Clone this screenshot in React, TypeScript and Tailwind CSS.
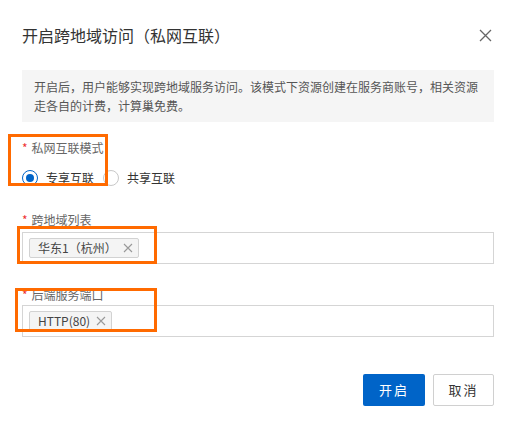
import React from 'react'

const font = { fontFamily: '"Noto Sans CJK SC", "Noto Sans", sans-serif' }

function Tag({ label }: { label: string }) {
  return (
    <span className="inline-flex h-[20px] items-center gap-[6px] rounded-[2px] border border-[#d2d2d2] bg-[#f4f4f4] pl-[8px] pr-[5px] text-[12px] leading-none text-[#444]">
      {label}
      <svg className="h-[10px] w-[10px]" viewBox="0 0 10 10" fill="none" stroke="#999" strokeWidth="1.1">
        <path d="M1 1l8 8M9 1l-8 8" />
      </svg>
    </span>
  )
}

function Label({ text }: { text: string }) {
  return (
    <div className="flex h-[18px] items-center text-[12px] leading-[18px] text-[#666]">
      <span className="mr-[4px] text-[#e33]">*</span>
      {text}
    </div>
  )
}

export default function App() {
  return (
    <div className="relative h-[426px] w-[519px] overflow-hidden bg-white" style={font}>
      <div className="flex flex-col pl-[22px] pr-[25px]">
        <div className="mt-[25px] flex h-[20px] items-center justify-between">
          <span className="text-[16px] leading-[20px] text-[#333]">开启跨地域访问（私网互联）</span>
          <svg className="mr-[2px] h-[13px] w-[13px]" viewBox="0 0 13 13" fill="none" stroke="#666" strokeWidth="1.3">
            <path d="M1 1l11 11M12 1L1 12" />
          </svg>
        </div>

        <div className="mt-[25px] bg-[#f5f5f5] px-[12px] py-[7px] text-[12px] leading-[19px] text-[#555]">
          开启后，用户能够实现跨地域服务访问。该模式下资源创建在服务商账号，相关资源走各自的计费，计算巢免费。
        </div>

        <div className="mt-[17px]">
          <Label text="私网互联模式" />
        </div>
        <div className="mt-[11px] flex h-[20px] items-center text-[12px] text-[#333]">
          <span className="flex h-[16px] w-[16px] items-center justify-center rounded-full border border-[#0064c8] bg-white">
            <span className="h-[8px] w-[8px] rounded-full bg-[#0064c8]" />
          </span>
          <span className="ml-[8px]">专享互联</span>
          <span className="ml-[9px] h-[16px] w-[16px] rounded-full border border-[#c8c8c8] bg-white" />
          <span className="ml-[8px]">共享互联</span>
        </div>

        <div className="mt-[23px]">
          <Label text="跨地域列表" />
        </div>
        <div className="mt-[3px] flex h-[32px] items-center border border-[#d5d5d5] px-[6px]">
          <Tag label="华东1（杭州）" />
        </div>

        <div className="mt-[22px]">
          <Label text="后端服务端口" />
        </div>
        <div className="mt-[1px] flex h-[32px] items-center border border-[#d5d5d5] px-[6px]">
          <Tag label="HTTP(80)" />
        </div>

        <div className="mt-[37px] flex justify-end gap-[8px]">
          <button className="h-[32px] w-[62px] rounded-[2px] bg-[#0064c8] text-[13px] tracking-[2px] text-white">开启</button>
          <button className="h-[32px] w-[61px] rounded-[2px] border border-[#d0d0d0] bg-white text-[13px] tracking-[2px] text-[#333]">取消</button>
        </div>
      </div>

      <div className="pointer-events-none absolute left-[8px] top-[134px] h-[52px] w-[100px] border-[3px] border-[#ff6a00]" />
      <div className="pointer-events-none absolute left-[17px] top-[226px] h-[38px] w-[140px] border-[3px] border-[#ff6a00]" />
      <div className="pointer-events-none absolute left-[15px] top-[288px] h-[44px] w-[142px] border-[3px] border-[#ff6a00]" />
    </div>
  )
}
